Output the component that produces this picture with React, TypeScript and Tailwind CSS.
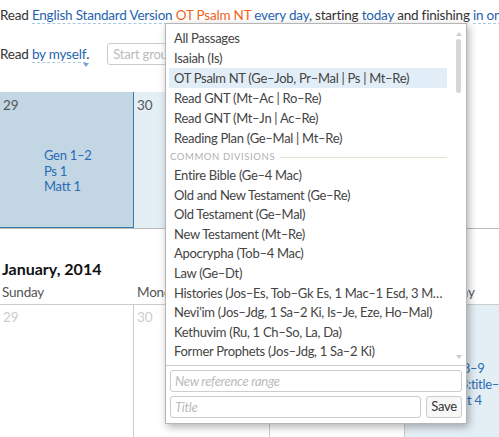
import React from "react";

const Caret = () => (
  <span className="absolute right-[-3px] bottom-[-5px] w-0 h-0 border-l-[3px] border-r-[3px] border-t-[4px] border-l-transparent border-r-transparent border-t-[#7aa7d4]" />
);

const Link = ({ children, color = "blue", caret = false }: { children: React.ReactNode; color?: "blue" | "orange"; caret?: boolean }) => (
  <span
    className={
      "relative border-b border-dashed " +
      (color === "blue" ? "text-[#1f63ad] border-[#a9c8e6]" : "text-[#f0641e] border-[#f4b08a]")
    }
  >
    {children}
    {caret && <Caret />}
  </span>
);

const items1 = [
  "All Passages",
  "Isaiah (Is)",
  "OT Psalm NT (Ge–Job, Pr–Mal | Ps | Mt–Re)",
  "Read GNT (Mt–Ac | Ro–Re)",
  "Read GNT (Mt–Jn | Ac–Re)",
  "Reading Plan (Ge–Mal | Mt–Re)",
];
const items2 = [
  "Entire Bible (Ge–4 Mac)",
  "Old and New Testament (Ge–Re)",
  "Old Testament (Ge–Mal)",
  "New Testament (Mt–Re)",
  "Apocrypha (Tob–4 Mac)",
  "Law (Ge–Dt)",
  "Histories (Jos–Es, Tob–Gk Es, 1 Mac–1 Esd, 3 Mac, 4 Mac)",
  "Nevi’im (Jos–Jdg, 1 Sa–2 Ki, Is–Je, Eze, Ho–Mal)",
  "Kethuvim (Ru, 1 Ch–So, La, Da)",
  "Former Prophets (Jos–Jdg, 1 Sa–2 Ki)",
];

export default function App() {
  return (
    <div
      className="relative w-[499px] h-[437px] overflow-hidden bg-white text-[13.5px] tracking-[-0.2px] text-[#333]"
      style={{ fontFamily: "Lato, 'Noto Sans', sans-serif" }}
    >
      {/* Sentence */}
      <div className="pt-[5px] h-[36px] whitespace-nowrap leading-[20px]">
        Read <Link caret>English Standard Version</Link> <Link color="orange">OT Psalm NT</Link>{" "}
        <Link>every day</Link>, starting <Link>today</Link> and finishing <Link>in one year</Link>
      </div>
      <div className="flex items-center h-[36px] whitespace-nowrap">
        <span>
          Read <Link caret>by myself</Link>.
        </span>
        <input
          className="ml-[18px] w-[120px] h-[22px] px-[5px] border border-[#ccc] rounded-[3px] text-[13px] placeholder:text-[#bbb] outline-none"
          placeholder="Start group reading"
        />
      </div>

      {/* previous week row */}
      <div className="mt-[20px] flex h-[137px] border-b border-[#bbb]">
        <div className="w-[134px] bg-[#c2d6e4] border-r border-b border-[#3d78a8] pl-[3px] pt-[3px] flex flex-col">
          <div className="text-[#555]">29</div>
          <div className="mt-[33px] pl-[41px] text-[13px] tracking-[-0.3px] leading-[15.5px] text-[#2a6cb4]">
            <div>Gen 1–2</div>
            <div>Ps 1</div>
            <div>Matt 1</div>
          </div>
        </div>
        <div className="w-[136px] bg-[#e4eef5] pl-[3px] pt-[3px] text-[#555]">30</div>
        <div className="flex-1" />
      </div>

      {/* January */}
      <div className="mt-[30px] pl-[2px] text-[16px] tracking-normal font-bold text-[#111] leading-[20px]">January, 2014</div>
      <div className="mt-[3px] grid grid-cols-[134px_136px_135px_1fr] text-[#555] leading-[20px] border-b border-[#ccc] pb-[2px]">
        <div className="pl-[2px]">Sunday</div>
        <div className="pl-[3px]">Monday</div>
        <div className="pl-[3px]">Tuesday</div>
        <div className="pl-[2px]">Wednesday</div>
      </div>
      <div className="grid grid-cols-[134px_136px_135px_1fr] h-[140px]">
        <div className="border-r border-[#ccc] pl-[3px] pt-[2px] text-[#ccc]">29</div>
        <div className="border-r border-[#ccc] pl-[3px] pt-[2px] text-[#ccc]">30</div>
        <div className="border-r border-[#ccc] pl-[3px] pt-[2px] text-[#ccc]">31</div>
        <div className="bg-[#e4eef5] pl-[3px] pt-[2px] text-[#555] flex flex-col">
          <div>1</div>
          <div className="mt-[33px] pl-[37px] text-[13px] tracking-[-0.3px] leading-[16px] text-[#2a6cb4] whitespace-nowrap">
            <div>Isa 8–9</div>
            <div>Ps 3:title–1</div>
            <div>Matt 4</div>
          </div>
        </div>
      </div>

      {/* Dropdown */}
      <div className="absolute left-[165px] top-[23px] w-[302px] h-[401px] bg-white border border-[#b5b5b5] shadow-[2px_3px_8px_rgba(0,0,0,0.3)] flex flex-col text-[13px] tracking-[-0.3px] text-[#444]">
        <div className="relative h-[341px] pt-[4px] pl-[3px] pr-[19px] overflow-hidden">
          {items1.map((t, i) => (
            <div
              key={t}
              className={
                "h-[20px] leading-[20px] pl-[5px] whitespace-nowrap overflow-hidden text-ellipsis " +
                (i === 2 ? "bg-[#e1eef7]" : "")
              }
            >
              {t}
            </div>
          ))}
          <div className="h-[18px] flex items-center pl-[1px] gap-[5px]">
            <span className="text-[9.5px] tracking-[0.6px] text-[#b0b0b0] whitespace-nowrap">COMMON DIVISIONS</span>
            <span className="flex-1 h-px bg-[#e2e0cf]" />
          </div>
          {items2.map((t) => (
            <div key={t} className="h-[19.6px] leading-[19.6px] pl-[5px] whitespace-nowrap overflow-hidden text-ellipsis">
              {t}
            </div>
          ))}
          {/* scrollbar */}
          <div className="absolute right-[4px] top-[8px] w-0 h-0 border-l-[3px] border-r-[3px] border-b-[4px] border-l-transparent border-r-transparent border-b-[#ccc]" />
          <div className="absolute right-[5px] top-[15px] w-[5px] h-[54px] rounded-full bg-[#d6d6d6]" />
          <div className="absolute right-[4px] top-[331px] w-0 h-0 border-l-[3px] border-r-[3px] border-t-[4px] border-l-transparent border-r-transparent border-t-[#ccc]" />
        </div>
        <div className="border-t border-[#ccc] px-[4px] pt-[4px] flex flex-col gap-[4px]">
          <input
            className="h-[22px] w-full px-[4px] border border-[#ccc] rounded-[3px] italic text-[13px] placeholder:text-[#bbb] outline-none"
            placeholder="New reference range"
          />
          <div className="flex gap-[5px]">
            <input
              className="h-[22px] flex-1 min-w-0 px-[4px] border border-[#ccc] rounded-[3px] italic text-[13px] placeholder:text-[#bbb] outline-none"
              placeholder="Title"
            />
            <button className="h-[22px] w-[36px] border border-[#ccc] rounded-[3px] bg-[#f7f7f7] text-[#333] text-[13px]">
              Save
            </button>
          </div>
        </div>
      </div>
    </div>
  );
}
